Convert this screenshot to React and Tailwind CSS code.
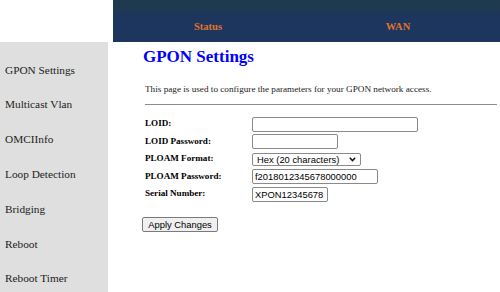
import React, { useState } from "react";

const menu = [
  "GPON Settings",
  "Multicast Vlan",
  "OMCIInfo",
  "Loop Detection",
  "Bridging",
  "Reboot",
  "Reboot Timer",
];

const App = () => {
  const [loid, setLoid] = useState("");
  const [loidPwd, setLoidPwd] = useState("");
  const [format, setFormat] = useState("hex20");
  const [ploam, setPloam] = useState("f2018012345678000000");
  const [serial, setSerial] = useState("XPON12345678");

  const inputCls =
    "h-[15px] border border-[#8a8a8a] rounded-[2px] bg-white px-[2px] text-[9.4px] text-black outline-none font-['Liberation_Sans',Arial,sans-serif]";

  return (
    <div className="flex h-[292px] w-[500px] overflow-hidden bg-white font-['Liberation_Serif','Times_New_Roman',serif]">
      {/* menu on the left */}
      <aside className="flex w-[108px] shrink-0 flex-col">
        <div className="h-[42px] shrink-0 bg-white" />
        <div className="min-h-0 flex-1 bg-[#dfdfdf] pt-[10.6px]">
          {menu.map((item) => (
            <div key={item} className="flex h-[34.8px] items-center pl-[5px] text-[11.3px] text-[#222] cursor-pointer">
              {item}
            </div>
          ))}
        </div>
      </aside>

      <div className="flex flex-1 flex-col">
        {/* top bar */}
        <header className="ml-[5px] flex h-[42px] shrink-0 flex-col">
          <div className="h-[11px] bg-[#1f3a4f]" />
          <div className="flex flex-1 bg-[#1c365d]">
            <div className="flex w-[190px] items-center justify-center text-[10.5px] font-bold text-[#e0712f]">Status</div>
            <div className="flex w-[190px] items-center justify-center text-[10.5px] font-bold text-[#e0712f]">WAN</div>
          </div>
        </header>

        <main className="pl-[35px] pr-[3px]">
          <h1 className="mt-[5px] h-[20px] text-[17px] font-bold leading-[20px] text-[#0000ff]">GPON Settings</h1>
          <p className="ml-[2px] mt-[16.5px] text-[9.2px] leading-[11px] text-[#222]">
            This page is used to configure the parameters for your GPON network access.
          </p>
          <hr className="ml-[2px] mt-[9px] border-t border-[#8c8c8c]" />

          {/* form */}
          <div className="ml-[2px] mt-[11px] flex flex-col">
            <div className="flex h-[17.5px] items-center">
              <label className="w-[107px] text-[9.1px] font-bold">LOID:</label>
              <input className={`${inputCls} w-[166px]`} value={loid} onChange={(e) => setLoid(e.target.value)} />
            </div>
            <div className="flex h-[17.5px] items-center">
              <label className="w-[107px] text-[9.1px] font-bold">LOID Password:</label>
              <input className={`${inputCls} w-[86px]`} value={loidPwd} onChange={(e) => setLoidPwd(e.target.value)} />
            </div>
            <div className="flex h-[17.5px] items-center">
              <label className="w-[107px] text-[9.1px] font-bold">PLOAM Format:</label>
              <div className="relative flex">
                <select
                  className="h-[13px] w-[109px] appearance-none border border-[#8a8a8a] rounded-[2px] bg-white pl-[4px] text-[9.4px] leading-[11px] text-black outline-none font-['Liberation_Sans',Arial,sans-serif]"
                  value={format}
                  onChange={(e) => setFormat(e.target.value)}
                >
                  <option value="hex20">Hex (20 characters)</option>
                  <option value="ascii10">ASCII (10 characters)</option>
                </select>
                <svg className="pointer-events-none absolute right-[5px] top-[4px]" width="7" height="5" viewBox="0 0 7 5">
                  <path d="M0.8 0.8 L3.5 3.6 L6.2 0.8" fill="none" stroke="#111" strokeWidth="1.5" />
                </svg>
              </div>
            </div>
            <div className="flex h-[17.5px] items-center">
              <label className="w-[107px] text-[9.1px] font-bold">PLOAM Password:</label>
              <input className={`${inputCls} w-[126px]`} value={ploam} onChange={(e) => setPloam(e.target.value)} />
            </div>
            <div className="flex h-[17.5px] items-center">
              <label className="w-[107px] text-[9.1px] font-bold">Serial Number:</label>
              <input className={`${inputCls} w-[76px]`} value={serial} onChange={(e) => setSerial(e.target.value)} />
            </div>
          </div>

          <button className="-ml-[1px] mt-[13.5px] h-[15px] w-[76px] border border-[#7a7a7a] rounded-[2px] bg-[#efefef] text-[9.4px] leading-[13px] text-black font-['Liberation_Sans',Arial,sans-serif]">
            Apply Changes
          </button>
        </main>
      </div>
    </div>
  );
};

export default App;
